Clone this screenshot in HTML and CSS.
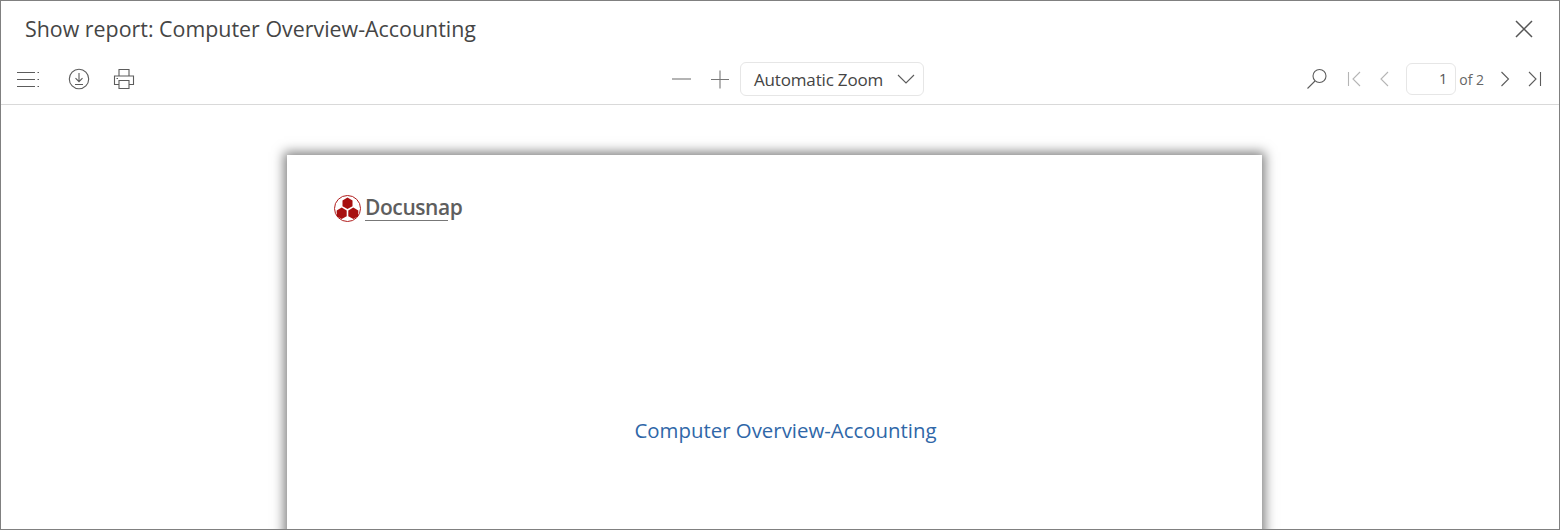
FILE: index.html
```html
<!DOCTYPE html>
<html lang="en">
<head>
<meta charset="utf-8">
<title>Show report</title>
<link rel="stylesheet" href="styles.css">
</head>
<body>
<div class="dialog">
  <header class="titlebar">
    <h1 class="title">Show report: Computer Overview-Accounting</h1>
    <svg class="close" width="20" height="20" viewBox="0 0 20 20"><path d="M2 2 18 18M18 2 2 18"/></svg>
  </header>
  <div class="toolbar">
    <div class="tools-left">
      <svg class="ico menu" width="24" height="18" viewBox="0 0 24 18"><path d="M1 2.500H19M1 9.500H19M1 16.500H19M21.500 2.500H23M21.500 9.500H23M21.500 16.500H23"/></svg>
      <svg class="ico download" width="22" height="22" viewBox="0 0 22 22"><circle cx="11" cy="11" r="9.700"/><path d="M11 5V13.500M7.500 10.200 11 13.700 14.500 10.200M7 16.500H15"/></svg>
      <svg class="ico print" width="22" height="22" viewBox="0 0 22 22"><path d="M6 8V1.500H16V8M6 16.500H1.500V8H20.500V16.500H16M6 12.500H16V20.500H6ZM3.500 10.500H5"/></svg>
    </div>
    <div class="tools-center">
      <svg class="ico zoom-minus" width="20" height="20" viewBox="0 0 20 20"><path d="M0 10H19"/></svg>
      <svg class="ico zoom-plus" width="20" height="20" viewBox="0 0 20 20"><path d="M1 10.500H19M10 1.500V19.500"/></svg>
      <div class="select">
        <span>Automatic Zoom</span>
        <svg class="ico" width="18" height="10" viewBox="0 0 18 10"><path d="M1 1 9 9 17 1"/></svg>
      </div>
    </div>
    <div class="tools-right">
      <svg class="ico search" width="22" height="22" viewBox="0 0 22 22"><circle cx="13.500" cy="8" r="6.500"/><path d="M9 13 1.500 20.500"/></svg>
      <svg class="ico off first" width="14" height="16" viewBox="0 0 14 16"><path d="M1.500 1V15M13 1 6 8 13 15"/></svg>
      <svg class="ico off prev" width="10" height="16" viewBox="0 0 10 16"><path d="M9 1 2 8 9 15"/></svg>
      <div class="page-input">1</div>
      <span class="of">of 2</span>
      <svg class="ico next" width="10" height="16" viewBox="0 0 10 16"><path d="M1.500 1 8.500 8 1.500 15"/></svg>
      <svg class="ico last" width="14" height="16" viewBox="0 0 14 16"><path d="M1 1 8 8 1 15M12.500 1V15"/></svg>
    </div>
  </div>
  <main class="viewer">
    <section class="page">
      <div class="logo">
        <svg width="27" height="27" viewBox="0 0 27 27">
          <circle class="logo-ring" cx="13.500" cy="13.500" r="13"/>
          <polygon class="logo-hex" points="13.500,2.500 18.500,5.400 18.500,11.200 13.500,14.100 8.500,11.200 8.500,5.400"/>
          <polygon class="logo-hex" points="7.700,12.500 12.700,15.400 12.700,21.200 7.700,24.100 2.700,21.200 2.700,15.400"/>
          <polygon class="logo-hex" points="19.300,12.500 24.300,15.400 24.300,21.200 19.300,24.100 14.300,21.200 14.300,15.400"/>
        </svg>
        <span class="logo-text">Docusnap</span>
      </div>
      <h2 class="doc-title">Computer Overview-Accounting</h2>
    </section>
  </main>
</div>
</body>
</html>
```
FILE: styles.css
```css
* { box-sizing: border-box; }
html, body { margin: 0; height: 100%; overflow: hidden; background: #fff; }
body { font-family: "Open Sans", "Noto Sans", sans-serif; color: #444; }
.dialog { height: 530px; border: 1px solid #808080; display: flex; flex-direction: column; overflow: hidden; }
.titlebar { height: 58px; flex: none; display: flex; align-items: center; justify-content: space-between; padding: 0 25px 0 24px; }
.title { margin: 0 0 3px; font-size: 21.400px; font-weight: 400; color: #454545; }
.close { margin-bottom: 2px; }
.close path { fill: none; stroke: #555; stroke-width: 1.500; }
.toolbar { height: 46px; flex: none; border-bottom: 1px solid #d9d9d9; display: grid; grid-template-columns: 1fr auto 1fr; align-items: center; padding: 0 16px 5px 15px; }
.ico { flex: none; }
.ico path, .ico circle { fill: none; stroke: #5c5c5c; stroke-width: 1.100; }
.tools-left { display: flex; align-items: center; }
.download { margin-left: 28px; }
.print { margin-left: 23px; }
.tools-center { display: flex; align-items: center; margin-left: 36px; }
.zoom-plus { margin-left: 19px; margin-right: 10px; }
.zoom-minus { margin-left: 1px; margin-right: -1px; }
.zoom-minus path, .zoom-plus path { stroke: #777; }
.select { width: 184px; height: 34px; border: 1px solid #e6e6e6; border-radius: 6px; display: flex; align-items: center; justify-content: space-between; padding: 0 8px 0 13px; font-size: 17px; color: #444; letter-spacing: -0.01em; }
.tools-right { display: flex; align-items: center; justify-content: flex-end; padding-right: 3px; }
.search { margin-right: 19px; }
.off path { stroke: #b5b5b5; }
.prev { margin-left: 18px; margin-right: 17px; }
.page-input { width: 50px; height: 32px; border: 1px solid #e6e6e6; border-radius: 6px; font-size: 14.500px; line-height: 30px; text-align: right; padding-right: 8px; color: #555; }
.of { font-size: 14px; color: #666; margin-left: 3px; margin-right: 16px; }
.next { margin-right: 18px; }
.last { margin-right: -2px; }
.viewer { flex: 1; min-height: 0; display: flex; justify-content: flex-start; padding: 50px 0 0 286px; overflow: hidden; }
.page { width: 975px; height: 900px; flex: none; background: #fff; box-shadow: 0 0 11px 3px rgba(0, 0, 0, 0.5); padding: 39px 47px 0 47px; }
.logo { display: flex; align-items: center; gap: 4px; height: 29px; }
.logo-ring { fill: #fff; stroke: #b01c1c; stroke-width: 1; }
.logo-hex { fill: #a80f0f; }
.logo-text { position: relative; font-weight: 600; font-size: 21px; line-height: 24px; color: #5e5e5e; letter-spacing: -0.02em; margin-top: -3px; }
.logo-text::after { content: ""; position: absolute; left: 0; top: 25px; width: 83px; height: 1px; background: #777; }
.doc-title { margin: 193px 0 0 0; padding-left: 22px; font-size: 20.400px; font-weight: 400; color: #2f67a8; text-align: center; }
```
